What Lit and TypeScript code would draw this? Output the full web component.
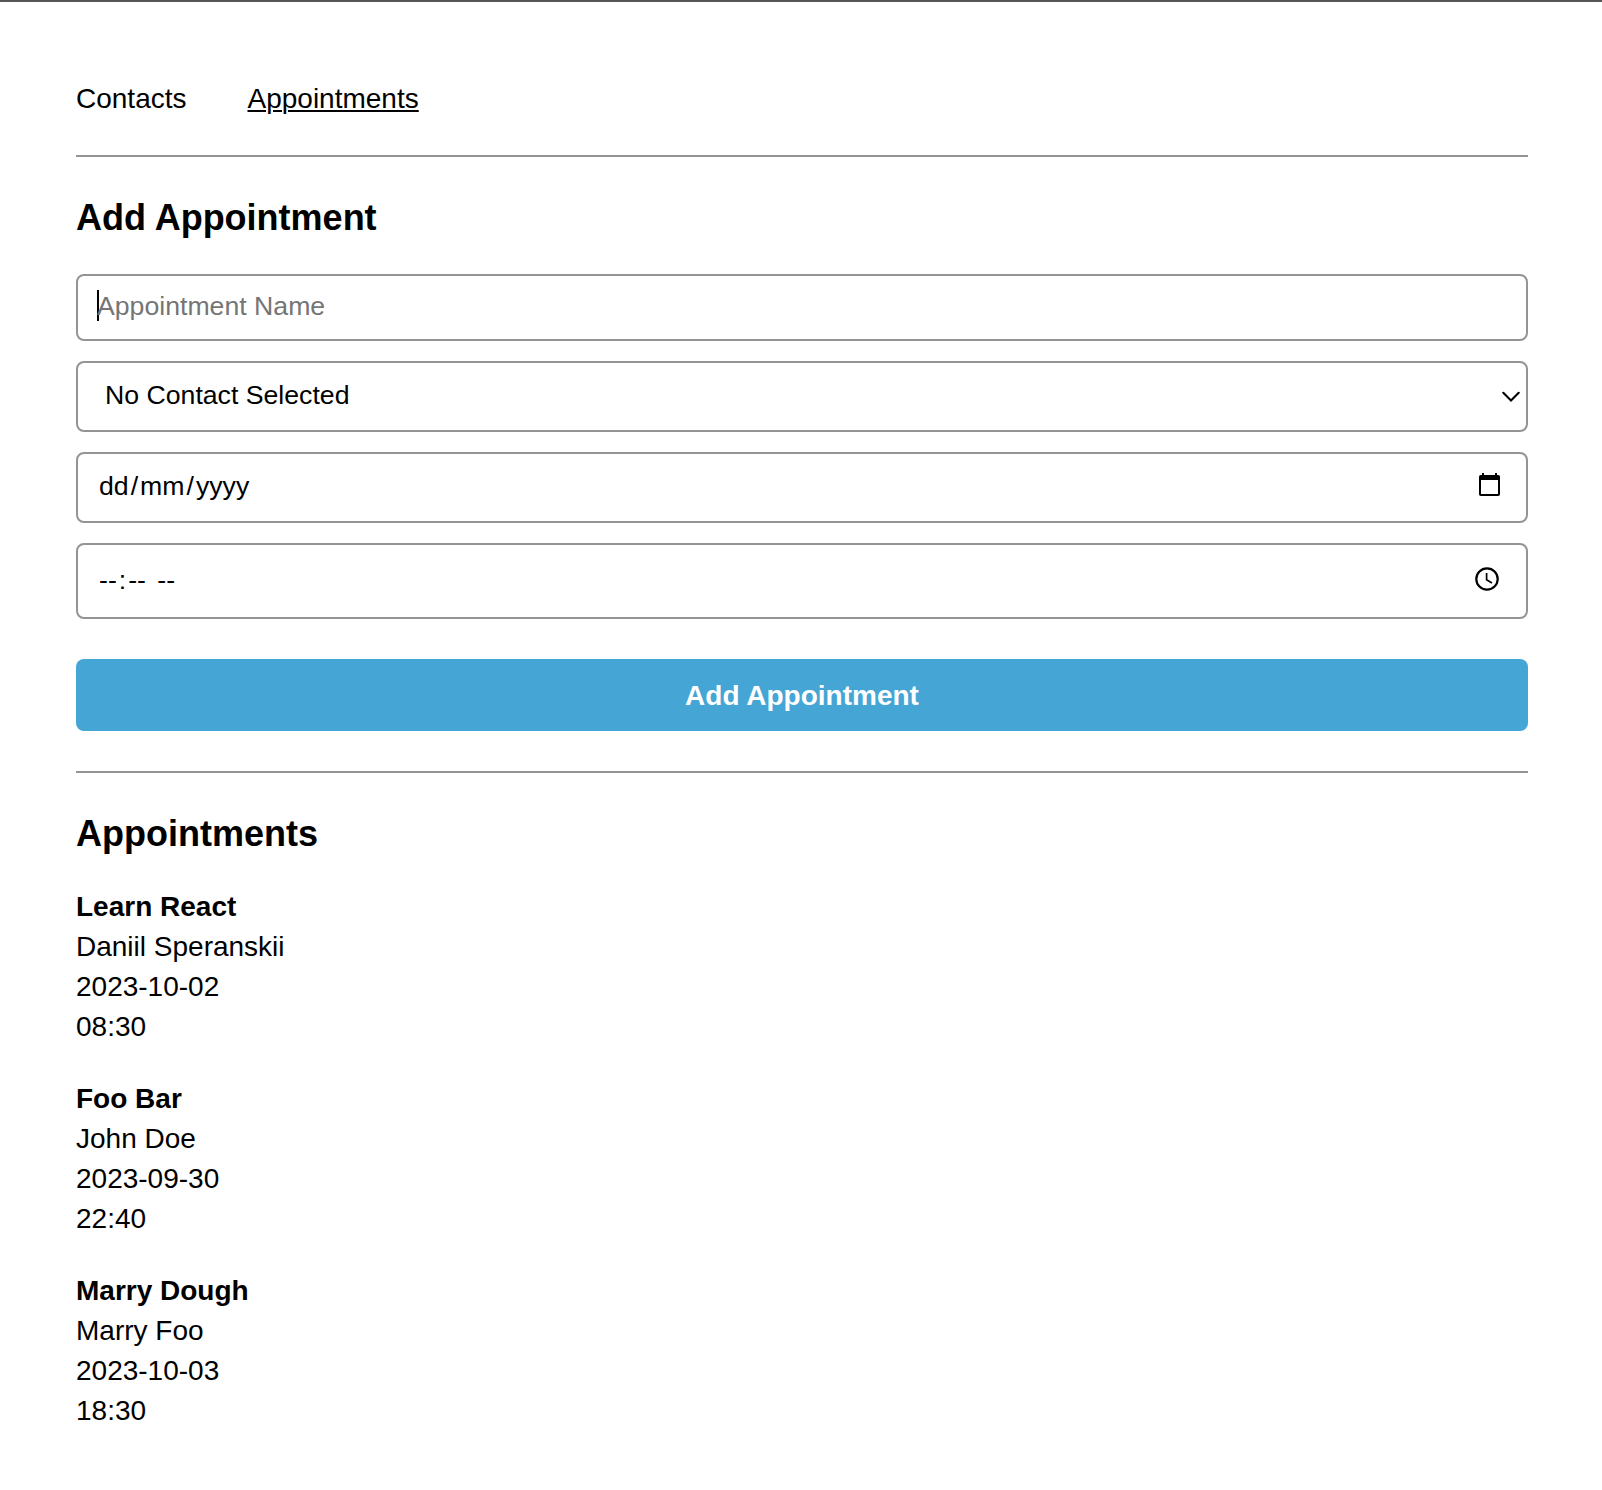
import { LitElement, html, css, svg } from "lit";
import { customElement, state } from "lit/decorators.js";

interface Appointment {
  title: string;
  contact: string;
  date: string;
  time: string;
}

const chevron = html`<svg class="icon chevron" width="18" height="12" viewBox="0 0 18 12">
  ${svg`<path d="M1.3 1.8 L9 9.4 L16.7 1.8" fill="none" stroke="#000" stroke-width="2.1" stroke-linecap="round"/>`}
</svg>`;

const calendar = html`<svg class="icon calendar" width="21" height="23" viewBox="0 0 21 23">
  ${svg`<path fill="#000" fill-rule="evenodd" d="M3 0H5V2H16V0H18V2H19.2Q21 2 21 3.8V21.2Q21 23 19.2 23H1.8Q0 23 0 21.2V3.8Q0 2 1.8 2H3ZM2 7V21H19V7Z"/>`}
</svg>`;

const clock = html`<svg class="icon clock" width="24" height="24" viewBox="0 0 24 24">
  ${svg`<circle cx="12" cy="12" r="10.7" fill="none" stroke="#000" stroke-width="2.2"/>
  <path d="M11.6 6V12.8L17 15.9" fill="none" stroke="#000" stroke-width="1.7"/>`}
</svg>`;

@customElement("app-root")
export class AppRoot extends LitElement {
  static styles = css`
    :host {
      display: block;
      box-sizing: border-box;
      min-height: 1490px;
      background: #fff;
      border-top: 2px solid #575556;
      padding: 77px 74px 0 76px;
      font-family: "Liberation Sans", Arial, Helvetica, sans-serif;
      font-size: 28px;
      line-height: 40px;
      color: #000;
    }
    .nav {
      display: flex;
      gap: 61px;
      padding-bottom: 36px;
      border-bottom: 2px solid #949494;
    }
    .link {
      color: #000;
      text-decoration: none;
    }
    .link.active {
      text-decoration: underline;
      text-decoration-thickness: 2px;
      text-underline-offset: 2px;
    }
    .title {
      margin: 0;
      padding-top: 33px;
      font-size: 36px;
      line-height: 55px;
      font-weight: 700;
    }
    .form {
      display: flex;
      flex-direction: column;
      gap: 20px;
      margin-top: 29px;
      padding-bottom: 40px;
      border-bottom: 2px solid #949494;
    }
    .field {
      display: flex;
      align-items: center;
      box-sizing: border-box;
      border: 2px solid #949494;
      border-radius: 8px;
      font-size: 26.667px;
      line-height: 30px;
      white-space: pre;
    }
    .name {
      height: 67px;
      padding: 0 19px 4px;
      color: #757575;
    }
    .caret {
      width: 2px;
      height: 31px;
      margin-right: -2px;
      background: #000;
    }
    .select {
      height: 71px;
      padding: 0 6px 3px 27px;
    }
    .date {
      height: 71px;
      padding: 0 26px 3px 19px;
    }
    .time {
      height: 76px;
      padding: 0 27px 3px 19px;
    }
    .part {
      padding: 0 2px;
    }
    .icon {
      display: block;
      margin-left: auto;
    }
    .chevron {
      margin-top: 3px;
    }
    .calendar {
      margin-bottom: 3px;
    }
    .clock {
      margin-bottom: 1px;
    }
    .submit {
      height: 72px;
      margin-top: 20px;
      padding: 2px 0 0;
      border: 0;
      border-radius: 8px;
      background: #45a5d4;
      color: #fff;
      font: inherit;
      font-weight: 700;
    }
    .list {
      display: flex;
      flex-direction: column;
      gap: 32px;
      margin-top: 26px;
    }
    .line {
      margin: 0;
    }
    .line.strong {
      font-weight: 700;
    }
  `;

  @state() private appointments: Appointment[] = [
    { title: "Learn React", contact: "Daniil Speranskii", date: "2023-10-02", time: "08:30" },
    { title: "Foo Bar", contact: "John Doe", date: "2023-09-30", time: "22:40" },
    { title: "Marry Dough", contact: "Marry Foo", date: "2023-10-03", time: "18:30" },
  ];

  render() {
    return html`
      <nav class="nav">
        <a class="link">Contacts</a>
        <a class="link active">Appointments</a>
      </nav>
      <h2 class="title">Add Appointment</h2>
      <div class="form">
        <div class="field name"><span class="caret"></span><span>Appointment Name</span></div>
        <div class="field select"><span>No Contact Selected</span>${chevron}</div>
        <div class="field date"><span class="part">dd</span><span>/</span><span class="part">mm</span><span>/</span><span class="part">yyyy</span>${calendar}</div>
        <div class="field time"><span class="part">--</span><span>:</span><span class="part">--</span><span> </span><span class="part">--</span>${clock}</div>
        <button class="submit">Add Appointment</button>
      </div>
      <h2 class="title">Appointments</h2>
      <div class="list">
        ${this.appointments.map(
          (a) => html`<div class="item">
            <p class="line strong">${a.title}</p>
            <p class="line">${a.contact}</p>
            <p class="line">${a.date}</p>
            <p class="line">${a.time}</p>
          </div>`
        )}
      </div>
    `;
  }
}
